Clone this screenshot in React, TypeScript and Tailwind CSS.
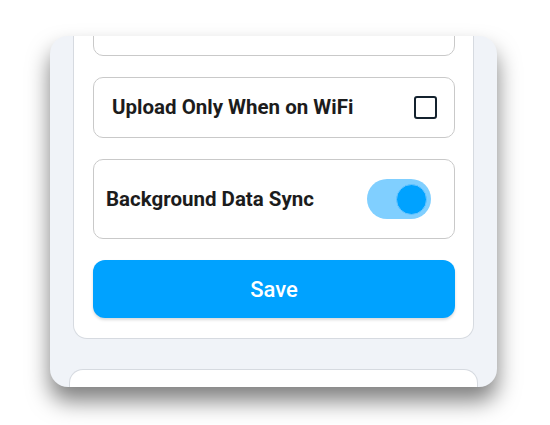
import { useState } from 'react'

function Toggle({ on, onChange }: { on: boolean; onChange: () => void }) {
  return (
    <button
      onClick={onChange}
      className={`w-[64px] h-[40px] rounded-full flex items-center px-[4px] ${on ? 'bg-[#80cfff] justify-end' : 'bg-[#d4d9df] justify-start'}`}
    >
      <span className={`w-[31px] h-[31px] rounded-full border border-[#66c4ff] ${on ? 'bg-[#00a2ff]' : 'bg-white'}`} />
    </button>
  )
}

export default function App() {
  const [wifiOnly, setWifiOnly] = useState(false)
  const [sync, setSync] = useState(true)

  return (
    <div className="w-[550px] h-[425px] bg-white pt-9 pl-[50px]" style={{ fontFamily: 'Roboto, "Noto Sans", sans-serif' }}>
      <div className="w-[447px] h-[351px] rounded-[18px] overflow-hidden bg-[#f0f3f8] shadow-[0_14px_22px_rgba(0,0,0,0.5)]">
        <div className="mx-[23px] -mt-[60px] bg-white rounded-b-[14px] border border-t-0 border-[#d6dae0] pl-[19px] pr-[18px] pt-5 pb-5 flex flex-col gap-[21px]">
          <div className="h-[60px] rounded-[10px] border border-[#c9c9c9]" />

          <div className="h-[61px] rounded-[10px] border border-[#c9c9c9] flex items-center justify-between pl-[18px] pr-[17px]">
            <span className="text-[20.5px] font-bold text-[#1c1c1c]">Upload Only When on WiFi</span>
            <button
              onClick={() => setWifiOnly(!wifiOnly)}
              className="w-[23px] h-[23px] rounded-[3px] border-[2.5px] border-[#14222e] bg-white"
            />
          </div>

          <div className="h-[80px] rounded-[10px] border border-[#c9c9c9] flex items-center justify-between pl-[12px] pr-[23px]">
            <span className="text-[20.5px] font-bold text-[#1c1c1c]">Background Data Sync</span>
            <Toggle on={sync} onChange={() => setSync(!sync)} />
          </div>

          <button className="h-[58px] rounded-[12px] bg-[#00a2ff] text-white text-[22px] font-medium shadow-[0_2px_3px_rgba(0,0,0,0.15)]">
            Save
          </button>
        </div>

        <div className="mx-[19px] mt-[30px] h-[40px] bg-white rounded-t-[14px] border border-b-0 border-[#d6dae0]" />
      </div>
    </div>
  )
}
